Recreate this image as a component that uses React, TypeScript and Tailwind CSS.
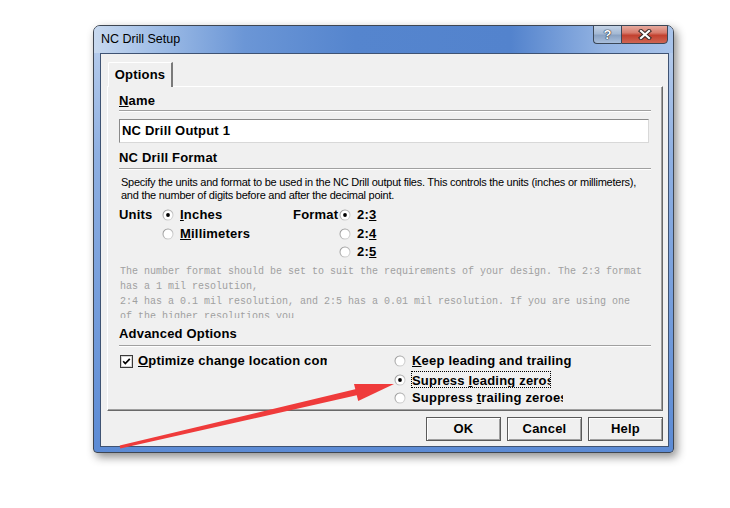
import React from 'react';

const Radio = ({ checked = false }: { checked?: boolean }) => {
  const id = 'rg' + React.useId().replace(/[^a-zA-Z0-9]/g, '');
  return (
    <svg width="12" height="12" viewBox="0 0 12 12" className="shrink-0">
      <defs>
        <linearGradient id={id} x1="0" y1="0" x2="1" y2="1">
          <stop offset="0%" stopColor="#8a8a8a" />
          <stop offset="100%" stopColor="#e2e2e2" />
        </linearGradient>
      </defs>
      <circle cx="6" cy="6" r="5.5" fill={`url(#${id})`} />
      <circle cx="6" cy="6" r="4.5" fill="#ffffff" />
      {checked && <circle cx="6" cy="6" r="1.9" fill="#000000" />}
    </svg>
  );
};

const Checkbox = () => (
  <svg width="13" height="13" viewBox="0 0 13 13" className="shrink-0">
    <rect x="0.5" y="0.5" width="12" height="12" fill="#ffffff" stroke="#3a3a3a" />
    <rect x="1.5" y="1.5" width="10" height="10" fill="none" stroke="#d4d4d4" />
    <path d="M3.2 6.3 L5.3 8.6 L9.8 3.8" fill="none" stroke="#000000" strokeWidth="1.7" />
  </svg>
);

const Divider = () => (
  <div className="h-[2px] border-t border-[#a0a0a0] bg-white" />
);

const Button = ({ children }: { children: React.ReactNode }) => (
  <div className="w-[75px] h-[24px] border border-[#5a5a5a] bg-[#f0f0f0] shadow-[inset_1px_1px_0_#ffffff,inset_-1px_-1px_0_#a0a0a0] flex items-center justify-center text-[13px] font-bold tracking-[0.2px] text-black">
    {children}
  </div>
);

const bold = 'text-[13px] font-bold tracking-[0.2px] text-black whitespace-nowrap';

export default function App() {
  return (
    <div className="relative w-[730px] h-[508px] bg-white overflow-hidden font-['Liberation_Sans',sans-serif]">
      <div className="pt-[25px] pl-[93px]">
        {/* window frame */}
        <div className="w-[581px] h-[428px] flex flex-col border border-[#3e4652] rounded-t-[7px] rounded-b-[4px] shadow-[3px_4px_10px_rgba(0,0,0,0.45)] bg-[linear-gradient(to_bottom,#bcd0ed_0%,#8fb0e2_30%,#5c8bd5_100%)]">
          {/* title bar */}
          <div className="h-[27px] flex items-start justify-between rounded-t-[6px] bg-[linear-gradient(to_right,#c8d9ef_0%,#a2bfe7_10%,#6b96d6_26%,#5585ce_45%,#5383cd_72%,#93b3e2_88%,#a8c3ea_100%)]">
            <div className="h-full flex items-center pl-[7px] text-[12.5px] text-black">NC Drill Setup</div>
            <div className="flex mt-[-1px] mr-[5px]">
              <div className="w-[28px] h-[19px] border border-[#3b4757] border-r-0 rounded-bl-[4px] bg-[linear-gradient(to_bottom,#c4d3e6_0%,#a4b9d4_45%,#8aa2c3_55%,#a9bfdc_100%)] flex items-center justify-center text-[13px] font-bold text-white [text-shadow:0_0_1px_#1f2a38,0_0_1px_#1f2a38,0_0_1px_#1f2a38]">
                ?
              </div>
              <div className="w-[47px] h-[19px] border border-[#3b4757] rounded-br-[4px] bg-[linear-gradient(to_bottom,#e6aa9e_0%,#d77b6c_40%,#c2412f_55%,#cf6553_100%)] flex items-center justify-center">
                <svg width="14" height="11" viewBox="0 0 14 11">
                  <path d="M3 2 L11 9 M11 2 L3 9" stroke="#3a2a28" strokeWidth="4.2" strokeLinecap="square" />
                  <path d="M3 2 L11 9 M11 2 L3 9" stroke="#ffffff" strokeWidth="2.2" strokeLinecap="square" />
                </svg>
              </div>
            </div>
          </div>

          {/* client area */}
          <div className="ml-[6px] mr-[4px] h-[394px] border border-[#3f5373] bg-[#f0f0f0] flex flex-col">
            {/* tab */}
            <div className="mt-[8px] ml-[7px] w-[65px] h-[25px] mb-[-1px] relative z-10 bg-[#f0f0f0] border-t border-l border-white border-r-2 border-r-[#7a7a7a] rounded-tl-[2px] flex items-center justify-center pb-[1px]">
              <span className={bold}>Options</span>
            </div>

            {/* panel */}
            <div className="ml-[6px] w-[556px] h-[325px] border border-t-white border-l-white border-r-[#696969] border-b-[#696969] shadow-[inset_-1px_-1px_0_#a0a0a0] flex flex-col px-[11px]">
              <div className={`mt-[6px] h-[16px] flex items-center ${bold}`}>
                <span>
                  <span className="underline">N</span>ame
                </span>
              </div>
              <div className="mt-[1px]">
                <Divider />
              </div>
              <div className="mt-[7px] w-[530px] h-[24px] bg-white border border-[#d8d8d8] border-t-[#8a8a8a] border-l-[#8a8a8a] flex items-center pl-[2px]">
                <span className={bold}>NC Drill Output 1</span>
              </div>
              <div className={`mt-[7px] h-[16px] flex items-center ${bold}`}>NC Drill Format</div>
              <div className="mt-[2px]">
                <Divider />
              </div>
              <div className="mt-[6px] pl-[2px] text-[11px] tracking-[-0.25px] leading-[13px] text-black whitespace-nowrap">
                <div>Specify the units and format to be used in the NC Drill output files. This controls the units (inches or millimeters),</div>
                <div>and the number of digits before and after the decimal point.</div>
              </div>

              {/* units / format */}
              <div className="mt-[4px] flex flex-col">
                <div className="h-[18px] flex items-center">
                  <span className={`w-[43px] ${bold}`}>Units</span>
                  <Radio checked />
                  <span className={`ml-[6px] w-[70px] overflow-hidden ${bold}`}>
                    <span className="underline">I</span>nches
                  </span>
                  <span className="w-[43px]" />
                  <span className={`w-[46px] overflow-hidden ${bold}`}>Format</span>
                  <Radio checked />
                  <span className={`ml-[6px] ${bold}`}>
                    2:<span className="underline">3</span>
                  </span>
                </div>
                <div className="h-[19px] flex items-center">
                  <span className="w-[43px]" />
                  <Radio />
                  <span className={`ml-[6px] w-[70px] overflow-hidden ${bold}`}>
                    <span className="underline">M</span>illimeters
                  </span>
                  <span className="w-[89px]" />
                  <Radio />
                  <span className={`ml-[6px] ${bold}`}>
                    2:<span className="underline">4</span>
                  </span>
                </div>
                <div className="h-[18px] flex items-center">
                  <span className="w-[220px]" />
                  <Radio />
                  <span className={`ml-[6px] ${bold}`}>
                    2:<span className="underline">5</span>
                  </span>
                </div>
              </div>

              <div className="mt-[3px] h-[54px] overflow-hidden pl-[1px] font-['Liberation_Mono',monospace] text-[10px] leading-[15px] text-[#a0a0a0] whitespace-pre">
                <div>The number format should be set to suit the requirements of your design. The 2:3 format</div>
                <div>has a 1 mil resolution,</div>
                <div>2:4 has a 0.1 mil resolution, and 2:5 has a 0.01 mil resolution. If you are using one</div>
                <div>of the higher resolutions you</div>
              </div>

              <div className={`mt-[8px] h-[16px] flex items-center ${bold}`}>Advanced Options</div>
              <div className="mt-[3px]">
                <Divider />
              </div>

              {/* advanced options */}
              <div className="mt-[5px] flex">
                <div className="w-[275px] h-[18px] flex items-center pl-[1px]">
                  <Checkbox />
                  <span className={`ml-[5px] w-[189px] overflow-hidden ${bold}`}>
                    <span className="underline">O</span>ptimize change location commands
                  </span>
                </div>
                <div className="flex flex-col">
                  <div className="h-[18px] flex items-center">
                    <Radio />
                    <span className={`ml-[6px] ${bold}`}>
                      <span className="underline">K</span>eep leading and trailing
                    </span>
                  </div>
                  <div className="h-[19px] flex items-center">
                    <Radio checked />
                    <div className="ml-[5px] w-[140px] h-[17px] border border-dotted border-black overflow-hidden leading-[15px]">
                      <span className={bold}>
                        Supress <span className="underline">l</span>eading zeros
                      </span>
                    </div>
                  </div>
                  <div className="h-[18px] flex items-center">
                    <Radio />
                    <span className={`ml-[6px] w-[151px] overflow-hidden ${bold}`}>
                      Suppress <span className="underline">t</span>railing zeroes
                    </span>
                  </div>
                </div>
              </div>
            </div>

            {/* buttons */}
            <div className="mt-[6px] mr-[5px] flex justify-end gap-[6px]">
              <Button>OK</Button>
              <Button>Cancel</Button>
              <Button>Help</Button>
            </div>
          </div>
        </div>
      </div>

      {/* red annotation arrow */}
      <svg className="absolute left-0 top-0 pointer-events-none" width="730" height="508" viewBox="0 0 730 508">
        <polygon points="120.3,448.4 119.7,445.6 356.2,388.9 357.8,395.1" fill="#ef3b3b" />
        <polygon points="394,384 358.2,401 354,384" fill="#ef3b3b" />
      </svg>
    </div>
  );
}
